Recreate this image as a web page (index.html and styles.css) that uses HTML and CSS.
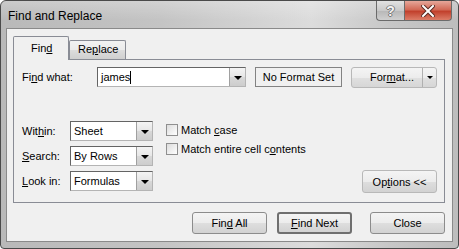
FILE: index.html
```html
<!DOCTYPE html>
<html lang="en">
<head>
    <meta charset="UTF-8">
    <title>Find and Replace</title>
    <link rel="stylesheet" href="styles.css">
</head>
<body>
    <div class="window">
        <!-- Title bar -->
        <div class="titlebar">
            <span class="title">Find and Replace</span>
            <div class="caption-buttons">
                <span class="cap-btn help">?</span>
                <span class="cap-btn close">
                    <svg width="14" height="12" viewBox="0 0 14 12">
                        <path d="M2 1 L12 11 M12 1 L2 11" stroke="#5b2a22" stroke-width="4" stroke-linecap="square"/>
                        <path d="M2 1 L12 11 M12 1 L2 11" stroke="#fff" stroke-width="2" stroke-linecap="square"/>
                    </svg>
                </span>
            </div>
        </div>

        <div class="client">
            <!-- Tabs -->
            <div class="tabs">
                <span class="tab active">Fin<u>d</u></span>
                <span class="tab">Re<u>p</u>lace</span>
            </div>

            <div class="panel">
                <div class="find-row">
                    <span class="find-label">Fi<u>n</u>d what:</span>
                    <div class="combo find-combo">
                        <span class="combo-text">james<span class="caret"></span></span>
                        <span class="combo-arrow"><span class="tri"></span></span>
                    </div>
                    <div class="format-box">No Format Set</div>
                    <div class="split-btn">
                        <span class="split-main">For<u>m</u>at...</span>
                        <span class="split-arrow"><span class="tri"></span></span>
                    </div>
                </div>

                <div class="options">
                    <div class="selects">
                        <div class="select-row">
                            <span class="select-label">Wit<u>h</u>in:</span>
                            <div class="combo small-combo">
                                <span class="combo-text">Sheet</span>
                                <span class="combo-arrow"><span class="tri"></span></span>
                            </div>
                        </div>
                        <div class="select-row">
                            <span class="select-label"><u>S</u>earch:</span>
                            <div class="combo small-combo">
                                <span class="combo-text">By Rows</span>
                                <span class="combo-arrow"><span class="tri"></span></span>
                            </div>
                        </div>
                        <div class="select-row">
                            <span class="select-label"><u>L</u>ook in:</span>
                            <div class="combo small-combo">
                                <span class="combo-text">Formulas</span>
                                <span class="combo-arrow"><span class="tri"></span></span>
                            </div>
                        </div>
                    </div>

                    <div class="checks">
                        <label class="check"><span class="box"></span><span>Match <u>c</u>ase</span></label>
                        <label class="check"><span class="box"></span><span>Match entire cell c<u>o</u>ntents</span></label>
                    </div>

                    <button class="btn options-btn">Op<u>t</u>ions &lt;&lt;</button>
                </div>
            </div>

            <!-- Bottom buttons -->
            <div class="footer">
                <button class="btn">Fin<u>d</u> All</button>
                <button class="btn default"><u>F</u>ind Next</button>
                <button class="btn close-btn">Close</button>
            </div>
        </div>
    </div>
</body>
</html>
```

FILE: styles.css
```css
body {
    margin: 0;
    padding: 0;
    background-color: #fff;
    font-family: "Liberation Sans", Arial, sans-serif;
    font-size: 11px;
    color: #000;
}
u {
    text-decoration: underline;
    text-underline-offset: 1px;
}
.window {
    width: 459px;
    height: 249px;
    box-sizing: border-box;
    border: 1px solid #4a4a4a;
    border-radius: 6px 6px 4px 4px;
    background: linear-gradient(to right, #b9b9b9 0%, #c4c4c4 35%, #dcdcdc 68%, #c7c7c7 85%, #bdbdbd 100%);
    display: flex;
    flex-direction: column;
    overflow: hidden;
}
/* Title bar */
.titlebar {
    height: 27px;
    display: flex;
    flex-shrink: 0;
    background: linear-gradient(to bottom, rgba(255,255,255,0.25), rgba(255,255,255,0) 70%);
}
.title {
    flex: 1;
    padding: 8px 0 0 7px;
    font-size: 12px;
    color: #000;
}
.caption-buttons {
    display: flex;
    margin-right: 6px;
    height: 20px;
}
.cap-btn {
    display: flex;
    align-items: center;
    justify-content: center;
    box-sizing: border-box;
    height: 20px;
    border: 1px solid #6b6b6b;
    border-top: none;
}
.help {
    width: 28px;
    border-radius: 0 0 0 4px;
    border-right: none;
    background: linear-gradient(to bottom, #e2e2e2, #c9c9c9 50%, #b7b7b7 51%, #cfcfcf);
    color: #f4f4f4;
    font-weight: bold;
    font-size: 14px;
    text-shadow: 1px 0 0 #777, -1px 0 0 #777, 0 1px 0 #777, 0 -1px 0 #999;
}
.close {
    width: 48px;
    border-radius: 0 0 4px 0;
    background: linear-gradient(to bottom, #e6a79a, #d26a57 45%, #c2412d 55%, #dc7d68);
}
/* Client area */
.client {
    flex: 1;
    margin: 0 5px 6px 5px;
    border: 1px solid #8a8a8a;
    background-color: #f0f0f0;
    padding: 7px 7px 0 6px;
    display: flex;
    flex-direction: column;
}
.tabs {
    display: flex;
    align-items: flex-end;
    height: 23px;
}
.tab {
    box-sizing: border-box;
    height: 19px;
    padding: 2px 7px 0 8px;
    border: 1px solid #898c95;
    border-bottom: none;
    background: linear-gradient(to bottom, #f2f2f2, #ebebeb 50%, #dddddd 51%, #cfcfcf);
    border-radius: 2px 2px 0 0;
}
.tab.active {
    width: 56px;
    height: 24px;
    margin-bottom: -1px;
    padding: 5px 0 0 17px;
    background: #f0f0f0;
    position: relative;
    z-index: 1;
}
.panel {
    box-sizing: border-box;
    height: 144px;
    border: 1px solid #898c95;
    padding: 7px 7px 0 8px;
}
/* Find what row */
.find-row {
    display: flex;
    height: 20px;
    align-items: center;
}
.find-label {
    width: 75px;
}
.combo {
    box-sizing: border-box;
    height: 20px;
    display: flex;
    border: 1px solid #707070;
    border-color: #646464 #b4b4b4 #b4b4b4 #646464;
    background-color: #fff;
}
.find-combo {
    width: 149px;
}
.combo-text {
    flex: 1;
    padding: 3px 0 0 3px;
    line-height: 12px;
}
.caret {
    display: inline-block;
    width: 1px;
    height: 13px;
    background-color: #000;
    vertical-align: -3px;
}
.combo-arrow {
    width: 15px;
    display: flex;
    align-items: center;
    justify-content: center;
    border-left: 1px solid #a0a0a0;
    background: linear-gradient(to bottom, #f4f4f4, #e6e6e6 50%, #d8d8d8 51%, #cdcdcd);
}
.tri {
    width: 0;
    height: 0;
    border-left: 4px solid transparent;
    border-right: 4px solid transparent;
    border-top: 4px solid #000;
    margin-top: 1px;
}
.format-box {
    box-sizing: border-box;
    width: 87px;
    height: 20px;
    margin-left: 9px;
    border: 1px solid #828282;
    text-align: center;
    line-height: 18px;
}
.split-btn {
    box-sizing: border-box;
    width: 86px;
    height: 21px;
    margin-left: 9px;
    display: flex;
    border: 1px solid #b8b8b8;
    border-radius: 3px;
    background: linear-gradient(to bottom, #f4f4f4, #ececec 50%, #e0e0e0 51%, #d6d6d6);
}
.split-main {
    flex: 1;
    text-align: right;
    padding: 3px 8px 0 0;
}
.split-arrow {
    width: 13px;
    display: flex;
    align-items: center;
    justify-content: center;
    border-left: 1px solid #b0b0b0;
}
.split-arrow .tri {
    border-left-width: 3px;
    border-right-width: 3px;
    border-top-width: 3px;
}
/* Within / Search / Look in */
.options {
    display: flex;
    margin-top: 34px;
}
.selects {
    display: flex;
    flex-direction: column;
    gap: 5px;
}
.select-row {
    display: flex;
    align-items: center;
    height: 20px;
}
.select-label {
    width: 48px;
}
.small-combo {
    width: 83px;
}
.checks {
    display: flex;
    flex-direction: column;
    gap: 6px;
    margin-left: 13px;
    padding-top: 2px;
}
.check {
    display: flex;
    align-items: center;
    height: 13px;
}
.box {
    box-sizing: border-box;
    width: 12px;
    height: 12px;
    margin-right: 3px;
    border: 1px solid #8f8f8f;
    background: linear-gradient(135deg, #dcdcdc, #ffffff);
}
/* Buttons */
.btn {
    box-sizing: border-box;
    height: 22px;
    padding: 0;
    font-family: "Liberation Sans", Arial, sans-serif;
    font-size: 11px;
    color: #000;
    border: 1px solid #8c8c8c;
    border-radius: 3px;
    background: linear-gradient(to bottom, #f4f4f4, #ececec 50%, #dedede 51%, #d2d2d2);
}
.options-btn {
    width: 75px;
    height: 23px;
    margin: 49px 0 0 auto;
    border-color: #b8b8b8;
}
.footer {
    display: flex;
    justify-content: flex-end;
    margin-top: 9px;
}
.footer .btn {
    width: 75px;
    margin-left: 10px;
}
.footer .btn.default {
    border: 2px solid #6f6f6f;
}
.footer .close-btn {
    margin-left: 18px;
}
```
